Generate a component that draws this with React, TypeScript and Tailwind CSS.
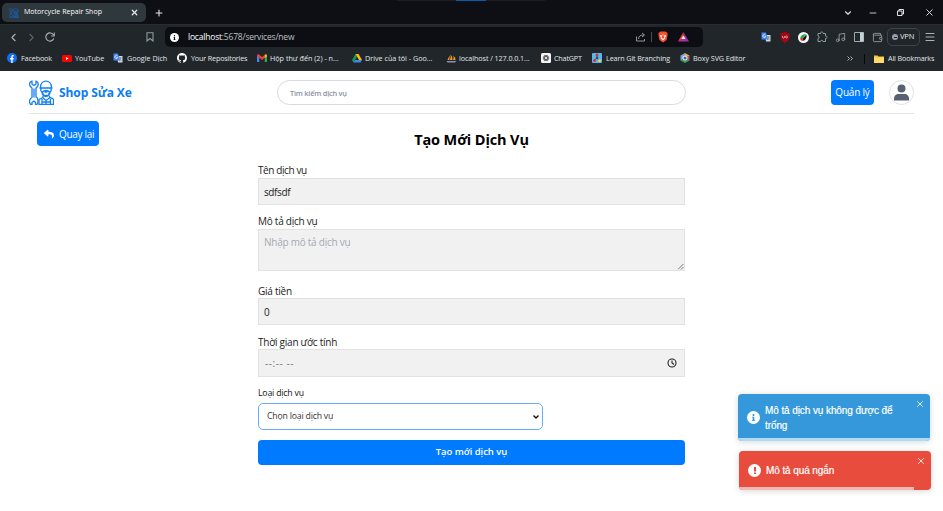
import type { ReactNode } from "react";
import { ChevronDown, ChevronLeft, ChevronRight, Menu, Minus, Music, Plus, RotateCw, Wallet, X, Bookmark } from "lucide-react";
import { FaReply, FaInfo } from "react-icons/fa";
import { SiGithub } from "react-icons/si";

function TranslateIcon() {
  return (
    <svg viewBox="0 0 20 20" className="block size-[10px]">
      <path d="M8 6h11v13H10z" fill="#d3d7dc" />
      <path d="M11 10h6M14 8v2M16 10c-1 3-3 5-4 6M13 12l4 4" stroke="#68727c" strokeWidth="1.3" fill="none" />
      <path d="M1 1h9l4 14H1z" fill="#4285f4" />
      <path d="M9 6a3 3 0 1 0 .5 3H7" stroke="#fff" strokeWidth="1.5" fill="none" />
    </svg>
  );
}

function FacebookIcon() {
  return (
    <svg viewBox="0 0 20 20" className="block size-[10px]">
      <circle cx="10" cy="10" r="10" fill="#1270f0" />
      <path d="M8.5 20v-7H6v-3h2.5V8c0-3 1.5-4.300 5-4v2.600c-2-.1-2.300.4-2.300 1.700V10h2.300l-.5 3h-1.800v7z" fill="#fff" />
    </svg>
  );
}

function GmailIcon() {
  return (
    <svg viewBox="0 0 20 16" className="block h-[8px] w-[10px]">
      <path d="M0 3h4.500v13H1q-1 0-1-1z" fill="#4285f4" />
      <path d="M15.500 3H20v12q0 1-1 1h-3.500z" fill="#34a853" />
      <path d="M0 3q1-4 4-2l6 5 6-5v6l-6 5-6-5-4-3z" fill="#ea4335" />
      <path d="M16 1q3-2 4 2v2l-4.500 3z" fill="#fbbc04" />
    </svg>
  );
}

function DriveIcon() {
  return (
    <svg viewBox="0 0 20 18" className="block h-[9px] w-[10px]">
      <path d="M7 0 0 12l3 5 7-12z" fill="#0f9d58" />
      <path d="M7 0h6l7 12h-6z" fill="#fbbc04" />
      <path d="M6 12h14l-3 5H3z" fill="#4285f4" />
    </svg>
  );
}

function SailIcon() {
  return (
    <svg viewBox="0 0 22 18" className="block h-[9px] w-[11px]">
      <path d="M3 12 7 3v9zM8 12q2-6 1-11 5 5 4 11zM14 12q2-5 1-9 4 4 4 9z" fill="#f29b28" />
      <path d="M1 14h20l-3 3H3z" fill="#8b91b5" />
    </svg>
  );
}

function ChatIcon() {
  return (
    <svg viewBox="0 0 20 20" className="block size-[10px]">
      <rect width="20" height="20" rx="3" fill="#f4f4f4" />
      <g fill="none" stroke="#333" strokeWidth="1.2">
        <ellipse cx="10" cy="10" rx="6" ry="3" />
        <ellipse cx="10" cy="10" rx="6" ry="3" transform="rotate(60 10 10)" />
        <ellipse cx="10" cy="10" rx="6" ry="3" transform="rotate(120 10 10)" />
      </g>
    </svg>
  );
}

function BranchingIcon() {
  return (
    <svg viewBox="0 0 20 20" className="block size-[10px]">
      <rect width="20" height="20" rx="2" fill="#55b7ee" />
      <path d="M10 4v6l-6 5M10 10l6 5" stroke="#285a86" strokeWidth="2" fill="none" />
      <circle cx="10" cy="4" r="3" fill="#e22c35" />
      <circle cx="5" cy="15" r="3" fill="#e22c35" />
      <circle cx="10" cy="10" r="2.5" fill="#284e75" />
      <circle cx="15" cy="15" r="3" fill="#f3d33c" />
    </svg>
  );
}

function BoxyIcon() {
  return (
    <svg viewBox="0 0 20 20" className="block size-[10px]">
      <path d="m10 0 9 5-9 5z" fill="#e9a83a" />
      <path d="m10 0-9 5v10l9-5z" fill="#73a7dc" />
      <path d="m1 15 9 5 9-5-9-5z" fill="#3e9c63" />
      <path d="M19 5v10l-9-5z" fill="#b9584d" />
      <circle cx="10" cy="10" r="5" fill="#e8eaf0" />
      <circle cx="10" cy="10" r="3" fill="#446ab0" />
    </svg>
  );
}

function YouTubeIcon() {
  return (
    <svg viewBox="0 0 20 14" className="block h-[7px] w-[10px]">
      <rect width="20" height="14" rx="3" fill="#f00" />
      <path d="m8 4 5 3-5 3z" fill="#fff" />
    </svg>
  );
}

function MechanicIcon({ className }: { className: string }) {
  return (
    <svg viewBox="0 0 50 50" className={className} fill="none" stroke="currentColor" strokeWidth="2.6" strokeLinejoin="round">
      <path d="M6 2v6l4 3 4-3V2c4 2 5 6 4 9-1 3-3 4-4 5v18c3 1 4 4 4 8 0 3-1 5-2 7h-3v-4l-3-3-4 3v4H3c-2-3-2-8-1-10 1-2 2-3 4-4V16C3 14 1 11 1 8s2-5 5-6zM10 17v18" />
      <path d="M23 15c0-17 22-17 22 0M21 16h26M24 17c-1 3 0 6 2 7 0 4 3 8 8 9 5-1 8-5 8-9 2-1 3-4 2-7M27 24c3-4 11-4 14 0l-2 7H29zM31 24h6" />
      <path d="M28 32v3l-8 4v10h29V39c0-2-3-3-8-4v-3M28 36l6 5 7-5M26 38v11M43 38v11M26 44h17M34 41v8" />
    </svg>
  );
}

function Mark({ width, icon, iconWidth, text }: { width: string; icon: ReactNode; iconWidth: string; text: ReactNode }) {
  return (
    <div className={`flex shrink-0 items-center ${width}`}>
      <span className={`shrink-0 ${iconWidth}`}>{icon}</span>
      {text}
    </div>
  );
}

function Browser() {
  return (
    <header className="h-[71px] bg-[#20262a] text-[#e3e7e9]">
      <div className="flex h-[25px] items-start border-b border-[#272e32] bg-[#0d0f14]">
        <div className="mt-[3px] ml-[2px] flex h-[19px] w-[144px] items-center rounded-[5px] bg-[#2f383c]">
          <MechanicIcon className="ml-[7px] size-[10px] shrink-0 text-[#0b6edb]" />
          <span className="ml-[5px] w-[107px] text-[7px] tracking-[0.03px] whitespace-nowrap text-white">Motorcycle Repair Shop</span>
          <X className="-ml-px size-[9px] shrink-0" strokeWidth={3.2} />
        </div>
        <Plus className="mt-[8px] ml-[8px] size-[10px]" strokeWidth={2.6} />
        <div className="ml-[233px] flex h-px w-[148px] justify-center bg-[#1b1d20]">
          <span className="h-px w-[30px] bg-[#075da8]" />
        </div>
        <ChevronDown className="mt-[8px] ml-[298px] size-[10px]" strokeWidth={2.6} />
        <Minus className="mt-[8px] ml-[15px] size-[10px]" />
        <svg viewBox="0 0 14 14" className="mt-[9px] ml-[19px] size-[7px]" fill="none" stroke="currentColor" strokeWidth="2">
          <path d="M1 4h9v9H1zM4 4V1h9v9h-3" />
        </svg>
        <X className="mt-[7px] ml-[20px] size-[11px]" />
      </div>
      <div className="flex h-[24px] items-center">
        <ChevronLeft className="ml-[7px] size-[13px] text-[#a9b4b9]" />
        <ChevronRight className="ml-[5px] size-[13px] text-[#59656b]" />
        <svg viewBox="0 0 20 20" className="ml-[7px] size-[10px] text-[#a9b4b9]" fill="none" stroke="currentColor" strokeWidth="2.2">
          <path d="M17.500 13A8.200 8.200 0 1 1 17 6M18.500 1v7h-6" />
        </svg>
        <svg viewBox="0 0 16 20" className="ml-[91px] h-[10px] w-[8px]" fill="none" stroke="#8f9ba1" strokeWidth="2.2">
          <path d="M2 1.500h12V18l-6-5-6 5z" />
        </svg>
        <div className="ml-[11px] flex h-[20px] w-[538px] items-center rounded-[5px] bg-[#0d0e13]">
          <span className="ml-[5px] flex size-[9px] items-center justify-center rounded-full bg-white text-[#0d0e13]">
            <FaInfo size={5} />
          </span>
          <span className="ml-[9px] w-[448px] text-[8.5px] tracking-[-0.2px] whitespace-nowrap text-[#bcc1c4]">
            <span className="text-white">localhost</span>:5678/services/new
          </span>
          <svg viewBox="0 0 20 20" className="size-[10px] shrink-0" fill="none" stroke="#8f9699" strokeWidth="2">
            <path d="M1 9v9h16v-4M5 14c0-6 4-8 11-8M12 2l5 4-5 4" />
          </svg>
          <span className="ml-[5px] h-[10px] w-px bg-[#485056]" />
          <svg viewBox="0 0 20 22" className="ml-[6px] h-[12px] w-[10px] shrink-0">
            <path d="m5 0-4 3v5l2 9 7 5 7-5 2-9V3l-4-3z" fill="#f4512c" />
            <path d="m4 7 4 1-1 4 3 3 3-3-1-4 4-1-2 7-4 4-4-4zM9 6h2l-1 4z" fill="#fff" />
          </svg>
          <svg viewBox="0 0 22 20" className="ml-[10px] h-[10px] w-[11px] shrink-0">
            <path d="m11 0-11 19 11-6z" fill="#ff4724" />
            <path d="m11 0 11 19-11-6z" fill="#8b3193" />
            <path d="M0 19h22l-7-6H7z" fill="#b12ba3" />
            <path d="m11 7-4 7h8z" fill="#fff" />
          </svg>
        </div>
        <div className="ml-[58px]"><TranslateIcon /></div>
        <svg viewBox="0 0 20 22" className="ml-[9px] h-[11px] w-[10px]">
          <path d="m10 0 9 3v9q-2 7-9 10Q3 19 1 12V3z" fill="#a30712" />
          <path d="M5 8v2q0 2 2 2t2-2V8m2 2a2 2 0 1 0 4 0 2 2 0 0 0-4 0" stroke="#f5d5d7" strokeWidth="1.3" fill="none" />
        </svg>
        <svg viewBox="0 0 22 22" className="ml-[8px] size-[11px]">
          <circle cx="11" cy="11" r="11" fill="#f8f8f8" />
          <path d="M4 13C5 7 10 4 16 4l-7 9z" fill="#08b848" />
          <path d="M9 13 17 5c1 6-1 10-6 13z" fill="#161a1c" />
          <path d="m4 13 5-1 2 6-5-1z" fill="#ee2736" />
        </svg>
        <svg viewBox="0 0 24 24" className="ml-[7px] size-[12px]" fill="none" stroke="#8f9ba1" strokeWidth="2" strokeLinejoin="round">
          <path d="M4 5h5c-1-4 6-4 5 0h5v5c4-1 4 6 0 5v6h-5c0-3-5-3-5 0H4v-6c3 0 3-5 0-5z" />
        </svg>
        <Music className="ml-[7px] size-[11px] text-[#8f9ba1]" />
        <svg viewBox="0 0 20 20" className="ml-[8px] size-[10px]">
          <path d="M1 1h18v18H1z" fill="none" stroke="#9eabb0" strokeWidth="2" />
          <path d="M12 1h7v18h-7z" fill="#c3d0d5" />
        </svg>
        <Wallet className="ml-[8px] size-[11px] text-[#8f9ba1]" />
        <div className="ml-[4px] flex h-[18px] w-[33px] items-center rounded-[5px] border border-[#3b454a]">
          <span className="ml-[4px] flex size-[6px] items-center justify-center rounded-full bg-[#9b9bac]">
            <i className="h-px w-[3px] bg-[#20262a]" />
          </span>
          <span className="ml-[2px] text-[7.5px] tracking-[-0.1px]">VPN</span>
        </div>
        <Menu className="ml-[4px] size-[12px] text-[#a9b4b9]" />
      </div>
      <nav className="flex h-[19px] items-center pl-[7px] text-[7.2px] whitespace-nowrap">
        <Mark width="w-[55px]" iconWidth="w-[14px]" icon={<FacebookIcon />} text={<span className="tracking-[-0.13px]">Facebook</span>} />
        <Mark width="w-[51px]" iconWidth="w-[13px]" icon={<YouTubeIcon />} text={<span className="tracking-[-0.05px]">YouTube</span>} />
        <Mark width="w-[64px]" iconWidth="w-[14px]" icon={<TranslateIcon />} text={<span className="tracking-[-0.01px]">Google Dịch</span>} />
        <Mark width="w-[80px]" iconWidth="w-[14px]" icon={<SiGithub className="size-[10px] text-white" />} text={<span className="tracking-[-0.16px]">Your Repositories</span>} />
        <Mark width="w-[95px]" iconWidth="w-[13px]" icon={<GmailIcon />} text={<span>Hộp thư đến (2) - n...</span>} />
        <Mark width="w-[94px]" iconWidth="w-[13px]" icon={<DriveIcon />} text={<span>Drive của tôi - Goo...</span>} />
        <Mark width="w-[95px]" iconWidth="w-[13px]" icon={<SailIcon />} text={<span className="tracking-[-0.08px]">localhost / 127.0.0.1...</span>} />
        <Mark width="w-[51px]" iconWidth="w-[13px]" icon={<ChatIcon />} text={<span className="tracking-[-0.18px]">ChatGPT</span>} />
        <Mark width="w-[88px]" iconWidth="w-[14px]" icon={<BranchingIcon />} text={<span className="tracking-[-0.12px]">Learn Git Branching</span>} />
        <Mark width="w-[167px]" iconWidth="w-[13px]" icon={<BoxyIcon />} text={<span className="tracking-[-0.08px]">Boxy SVG Editor</span>} />
        <svg viewBox="0 0 12 10" className="mr-[11px] h-[5px] w-[6px] shrink-0" fill="none" stroke="#bac3c7" strokeWidth="1.8"><path d="m1 1 4 4-4 4M7 1l4 4-4 4" /></svg>
        <span className="mr-[9px] h-[10px] w-px bg-[#070809]" />
        <svg viewBox="0 0 20 16" className="mr-[4px] h-[8px] w-[10px] shrink-0">
          <path d="M0 1h7l2 2h11v13H0z" fill="#f4c441" />
          <path d="M0 5h20v11H0z" fill="#ffda68" />
        </svg>
        <span className="tracking-[-0.12px]">All Bookmarks</span>
      </nav>
    </header>
  );
}

const fieldClass = "block w-full border border-[#e2e2e2] bg-[#f1f1f1] px-[5px] text-[10px] text-[#222] outline-none";

export default function App() {
  return (
    <div className="relative h-[511px] w-[943px] overflow-hidden bg-white font-['Open_Sans','Noto_Sans',sans-serif]">
      <Browser />
      <div className="mx-[29px] flex h-[43px] items-center border-b border-[#e3e4e6]">
        <MechanicIcon className="size-[25px] shrink-0 text-[#147fee]" />
        <strong className="ml-[5px] w-[218px] pt-px text-[12px] tracking-[-0.1px] text-[#087df5]">Shop Sửa Xe</strong>
        <input aria-label="Tìm kiếm dịch vụ" placeholder="Tìm kiếm dịch vụ" className="h-[25px] w-[409px] rounded-full border-[1.5px] border-[#d9dade] px-[12px] pt-px text-[7.4px] font-semibold tracking-[-0.22px] outline-none placeholder:font-semibold placeholder:text-[#8a91a1]" />
        <button className="ml-[145px] h-[25px] w-[43px] rounded-[4px] bg-[#007bff] text-[10px] tracking-[-0.2px] whitespace-nowrap text-white">Quản lý</button>
        <span className="ml-[15px] flex size-[25px] items-center justify-center rounded-full border border-[#e0e1e5]">
          <svg viewBox="0 0 30 34" className="h-[17px] w-[15px]" fill="#586171">
            <circle cx="15" cy="9" r="8" />
            <path d="M0 33v-3c0-7 4-10 9-10h12c5 0 9 3 9 10v3z" />
          </svg>
        </span>
      </div>
      <div className="h-[50px] pt-[7px] pl-[37px]">
        <button className="flex h-[25px] w-[62px] items-center rounded-[4px] bg-[#007bff] pl-[7px] text-[10px] whitespace-nowrap text-white">
          <FaReply className="mr-[5px] size-[10px] shrink-0" />
          <span className="pt-px tracking-[-0.3px]">Quay lại</span>
        </button>
      </div>
      <main className="mx-auto -mt-[34px] w-[427px]">
        <h1 className="h-[34px] text-center text-[14.5px] leading-[19px] font-bold tracking-[-0.12px] text-black">Tạo Mới Dịch Vụ</h1>
        <label className="block h-[51px] text-[10px] leading-[13px] tracking-[-0.4px] text-[#222]">
          Tên dịch vụ
          <input defaultValue="sdfsdf" className={`mt-px h-[27px] tracking-[-0.4px] ${fieldClass}`} />
        </label>
        <label className="block h-[69px] text-[10px] leading-[13px] tracking-[-0.25px] text-[#222]">
          Mô tả dịch vụ
          <div className={`mt-px flex h-[42px] items-start justify-between ${fieldClass}`}>
            <textarea placeholder="Nhập mô tả dịch vụ" className="block h-[40px] w-[400px] resize-none bg-transparent pt-[5px] leading-[15px] tracking-[-0.25px] outline-none placeholder:text-[#a4a9b5]" />
          </div>
          <svg viewBox="0 0 10 10" className="relative -top-[7px] ml-[420px] size-[6px]" stroke="#666" strokeWidth="1.4">
            <path d="m0 9 9-9M5 9l4-4" />
          </svg>
        </label>
        <label className="block h-[51px] pt-px text-[10px] leading-[12px] tracking-[-0.25px] text-[#222]">
          Giá tiền
          <input defaultValue="0" className={`mt-px h-[27px] ${fieldClass}`} />
        </label>
        <div className="h-[51px] pt-px text-[10px] leading-[12px] tracking-[-0.25px] text-[#222]">
          Thời gian ước tính
          <div className="mt-px flex h-[28px] items-center justify-between border border-[#e2e2e2] bg-[#f1f1f1] pr-[7px] pl-[6px] text-[#757575]">
            <span className="tracking-[0.55px]">--:-- --</span>
            <svg viewBox="0 0 20 20" className="size-[10px]" fill="none" stroke="#222" strokeWidth="2.2">
              <circle cx="10" cy="10" r="8" />
              <path d="M10 5v5l4 3" />
            </svg>
          </div>
        </div>
        <div className="h-[54px] pt-px text-[8.7px] leading-[13px] tracking-[-0.18px] text-[#111]">
          <div className="font-medium">Loại dịch vụ</div>
          <div className="mt-[3px] flex h-[27px] w-[285px] items-center justify-between rounded-[5px] border border-[#66aff8] pr-[3px] pl-[8px] text-[#333]">
            Chọn loại dịch vụ
            <svg viewBox="0 0 12 8" className="h-[4px] w-[6px]" fill="none" stroke="#111" strokeWidth="2.8"><path d="m1 1 5 5 5-5" /></svg>
          </div>
        </div>
        <button className="block h-[25px] w-full rounded-[4px] bg-[#007bff] text-[9.5px] font-semibold tracking-[-0.05px] text-white">Tạo mới dịch vụ</button>
      </main>
      <aside className="absolute top-[394px] left-[738px] font-['Liberation_Sans',sans-serif] text-[10px] tracking-[-0.09px] text-white [-webkit-text-stroke:0.2px_white]">
        <div className="flex h-[47px] w-[192px] flex-col overflow-hidden rounded-[4px] bg-[#3498db] shadow-[0_1px_6px_rgba(0,0,0,0.16)]">
          <div className="flex h-[44px]">
            <span className="mt-[17px] ml-[9px] flex size-[13px] shrink-0 items-center justify-center rounded-full bg-white text-[#3498db]"><FaInfo size={7} /></span>
            <p className="mt-[9px] ml-[5px] w-[148px] leading-[15px]">Mô tả dịch vụ không được để<br />trống</p>
            <X className="mt-[5px] ml-[2px] size-[10px] shrink-0" />
          </div>
          <span className="h-[3px] bg-[#addcf4]" />
        </div>
        <div className="mt-[10px] ml-px flex h-[39px] w-[192px] flex-col overflow-hidden rounded-[4px] bg-[#e74c3c] shadow-[0_1px_6px_rgba(0,0,0,0.16)]">
          <div className="flex h-[36px]">
            <span className="mt-[13px] ml-[9px] flex size-[13px] shrink-0 items-center justify-center rounded-full bg-white text-[#e74c3c]">
              <svg viewBox="0 0 4 14" className="h-[7px] w-[2px]" fill="currentColor"><path d="M0 0h4v9H0zM0 11h4v3H0z" /></svg>
            </span>
            <p className="mt-[12px] ml-[5px] w-[148px] leading-[15px]">Mô tả quá ngắn</p>
            <X className="mt-[5px] ml-[2px] size-[10px] shrink-0" />
          </div>
          <span className="h-[3px] w-[175px] bg-[#f5b7b1]" />
        </div>
      </aside>
    </div>
  );
}
